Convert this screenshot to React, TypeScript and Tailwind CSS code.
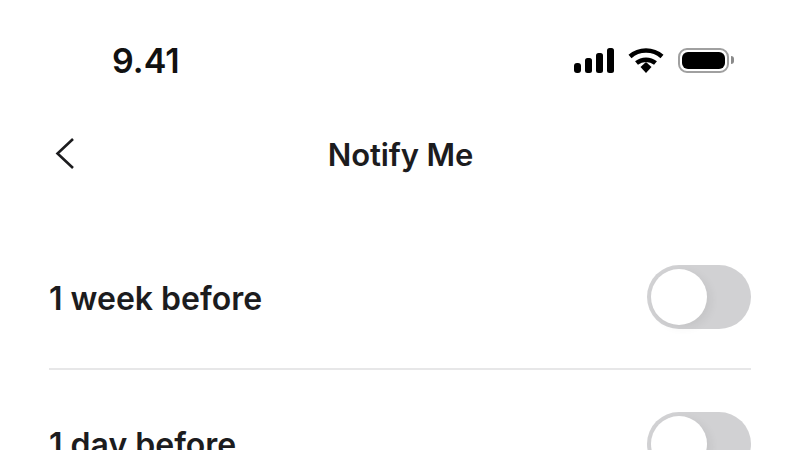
function Signal() {
  return (
    <svg width="40" height="25" viewBox="0 0 40 25" fill="#000">
      <rect x="0" y="15" width="7" height="10" rx="3" />
      <rect x="11" y="10" width="7" height="15" rx="2.5" />
      <rect x="22" y="5" width="7" height="20" rx="2.5" />
      <rect x="33" y="0" width="7" height="25" rx="2.5" />
    </svg>
  );
}

function Wifi() {
  return (
    <svg width="36" height="25" viewBox="0 0 36 25" fill="none" stroke="#000" strokeWidth="4.5">
      <path d="M2 8.5C11 0.5 25 0.5 34 8.5" />
      <path d="M8.5 15C14 10.5 22 10.5 27.5 15" />
      <path d="M12.5 19L18 14 23.5 19 18 25Z" fill="#000" stroke="none" />
    </svg>
  );
}

function Battery() {
  return (
    <div className="flex items-center gap-[2px]">
      <div className="w-[51px] h-[25px] rounded-[9px] border-2 border-[#a0a0a0] p-[2px]">
        <div className="w-full h-full rounded-[6px] bg-black" />
      </div>
      <div className="w-[3px] h-[8px] bg-[#8a8a8a] rounded-r-full" />
    </div>
  );
}

function BackArrow() {
  return (
    <svg
      className="absolute left-[54px] top-[17px]"
      width="22"
      height="33"
      viewBox="0 0 22 33"
      fill="none"
      stroke="#1c1c1e"
      strokeWidth="2.6"
    >
      <path d="M19 2L3.5 16.5 19 31" />
    </svg>
  );
}

function Toggle() {
  return (
    <div className="w-[104px] h-[64px] shrink-0 rounded-full bg-[#d1d1d3] p-[4px]">
      <div className="w-[56px] h-[56px] rounded-full bg-white shadow-[4px_3px_10px_rgba(0,0,0,0.06)]" />
    </div>
  );
}

export default function App() {
  return (
    <div className="w-[800px] h-[450px] overflow-hidden bg-white text-[#1c1c1e] font-['Inter','Liberation_Sans',sans-serif]">
      <div className="h-[120px] flex items-center justify-between pl-[112px] pr-[66px]">
        <span className="text-[34px] font-semibold text-[#111]">9.41</span>
        <div className="flex items-center gap-[14px]">
          <Signal />
          <Wifi />
          <Battery />
        </div>
      </div>

      <div className="relative h-[70px] flex items-center justify-center">
        <BackArrow />
        <h1 className="text-[31px] font-semibold pl-[1px] tracking-[-0.1px]">Notify Me</h1>
      </div>

      <div className="px-[49px] pt-[75px]">
        <div className="flex items-center justify-between pb-[39px] border-b-2 border-[#e7e7e8]">
          <span className="text-[32px] font-semibold pt-[4px]">1 week before</span>
          <Toggle />
        </div>
        <div className="flex items-center justify-between pt-[42px]">
          <span className="text-[32px] font-semibold pt-[2px]">1 day before</span>
          <Toggle />
        </div>
      </div>
    </div>
  );
}
